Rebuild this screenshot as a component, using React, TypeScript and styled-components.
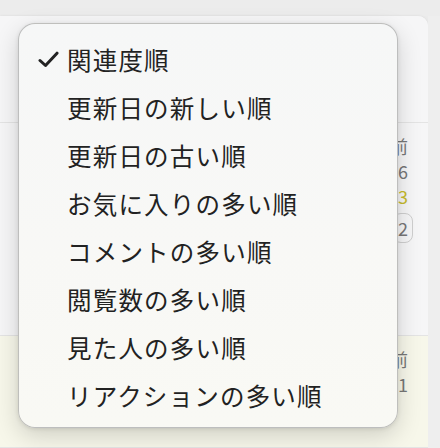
import styled, { createGlobalStyle } from "styled-components"

const GlobalStyle = createGlobalStyle`
  html, body {
    margin: 0;
    padding: 0;
    background: #ebebeb;
  }
  body {
    font-family: "Noto Sans CJK JP", "Noto Sans", sans-serif;
  }
`

const sortOptions = [
  "関連度順",
  "更新日の新しい順",
  "更新日の古い順",
  "お気に入りの多い順",
  "コメントの多い順",
  "閲覧数の多い順",
  "見た人の多い順",
  "リアクションの多い順"
]

const Page = styled.div`
  position: relative;
  width: 440px;
  height: 448px;
  overflow: hidden;
  background: #ebebeb;
`

const TopBar = styled.div`
  height: 16px;
  background: #ececec;
`

const Body = styled.div`
  display: flex;
  height: 432px;
`

const Card = styled.div`
  width: 428px;
  display: flex;
  flex-direction: column;
  background: #f6f6f6;
  border-top-right-radius: 10px;
  box-shadow: 0 0 3px rgba(0, 0, 0, 0.08);
  overflow: hidden;
`

const Strip = styled.div`
  flex: 1;
  background: #eeeeee;
`

const Row = styled.div<{ $height?: number; $tint?: string }>`
  display: flex;
  justify-content: flex-end;
  height: ${p => (p.$height ? `${p.$height}px` : "auto")};
  flex: ${p => (p.$height ? "none" : "1")};
  background: ${p => p.$tint || "#f6f6f7"};
  border-bottom: 1px solid #e4e4e4;
  box-sizing: border-box;
`

const Meta = styled.div`
  display: flex;
  flex-direction: column;
  align-items: flex-end;
  gap: 2px;
  padding: 12px 20px 0 0;
  font-family: "Noto Sans CJK JP", "Liberation Sans", sans-serif;
  font-size: 18px;
  line-height: 23px;
  color: #777;
`

const Count = styled.span<{ $color?: string }>`
  color: ${p => p.$color || "#777"};
`

const Badge = styled.span`
  margin-top: 3px;
  margin-right: -5px;
  padding: 3px 4px;
  border: 1px solid #cfcfcf;
  border-radius: 8px;
  line-height: 22px;
`

const Menu = styled.div`
  position: absolute;
  left: 18px;
  top: 23px;
  width: 380px;
  height: 405px;
  box-sizing: border-box;
  padding: 12px 0 8px;
  border-radius: 17px;
  border: 1px solid rgba(120, 120, 120, 0.45);
  background: linear-gradient(180deg, #f6f7f7 0%, #f8f8f6 55%, #f9f9f4 100%);
  box-shadow: 0 8px 24px rgba(0, 0, 0, 0.16), 0 1px 4px rgba(0, 0, 0, 0.1);
  display: flex;
  flex-direction: column;
`

const Item = styled.div`
  display: flex;
  align-items: center;
  height: 48px;
  padding-left: 19px;
  font-size: 24.5px;
  letter-spacing: 1.2px;
  font-weight: 400;
  color: #222;
  white-space: nowrap;
`

const CheckSlot = styled.span`
  display: inline-flex;
  align-items: center;
  width: 29px;
  height: 100%;
`

function CheckIcon() {
  return (
    <svg width="21" height="17" viewBox="0 0 21 17">
      <path
        d="M2 9.5 L7.5 14.5 L19 2.2"
        fill="none"
        stroke="#222"
        strokeWidth="3"
        strokeLinecap="round"
        strokeLinejoin="round"
      />
    </svg>
  )
}

export default function App() {
  const selected = 0

  return (
    <Page>
      <GlobalStyle />
      <TopBar />
      <Body>
        <Card>
          <Row $height={107} />
          <Row $height={213}>
            <Meta>
              <span>2日前</span>
              <Count>6</Count>
              <Count $color="#c6bb2c">3</Count>
              <Badge>2</Badge>
            </Meta>
          </Row>
          <Row $tint="#f7f7ea">
            <Meta>
              <span>5日前</span>
              <Count>1</Count>
            </Meta>
          </Row>
        </Card>
        <Strip />
      </Body>
      <Menu>
        {sortOptions.map((label, index) => (
          <Item key={label}>
            <CheckSlot>{index === selected ? <CheckIcon /> : null}</CheckSlot>
            {label}
          </Item>
        ))}
      </Menu>
    </Page>
  )
}
